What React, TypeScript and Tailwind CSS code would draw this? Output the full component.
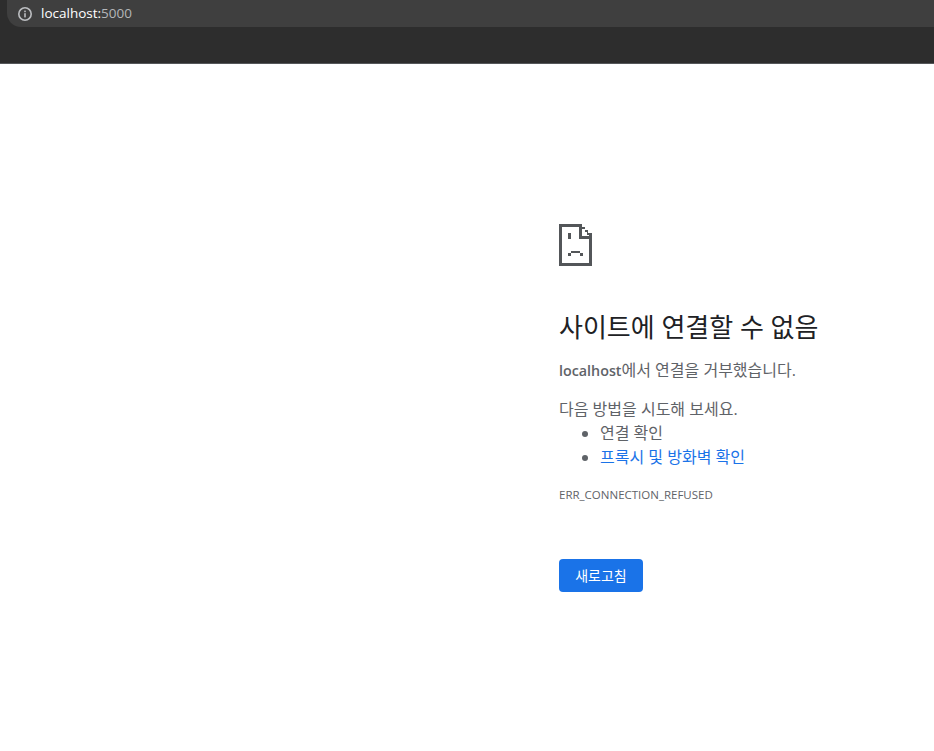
const font = "font-['Open_Sans','Noto_Sans_CJK_KR',sans-serif]"

function InfoIcon() {
  return (
    <svg width="16" height="16" viewBox="0 0 16 16" fill="none" className="text-[#bcbec1]">
      <circle cx="8" cy="8" r="6.2" stroke="currentColor" strokeWidth="1.6" />
      <rect x="7.2" y="7.2" width="1.6" height="4.2" fill="currentColor" />
      <rect x="7.2" y="4.6" width="1.6" height="1.6" fill="currentColor" />
    </svg>
  )
}

function SadPage() {
  return (
    <svg width="33" height="42" viewBox="0 0 33 42" fill="#535659" shapeRendering="crispEdges">
      <path d="M0 0h23v3h3v3h3v3h4v33H0zM3 3v36h27V15H20V3zM23 5v7h7v-1h-2V8h-2V5z" fillRule="evenodd" />
      <rect x="9" y="9" width="3" height="6" />
      <rect x="12" y="27" width="9" height="2" />
      <rect x="9" y="29" width="3" height="3" />
      <rect x="21" y="29" width="3" height="3" />
    </svg>
  )
}

export default function App() {
  return (
    <div className={`min-h-[751px] bg-white ${font}`}>
      <div className="h-[64px] bg-[#2d2d2d] border-b border-[#55575a]">
        <div className="ml-[7px] h-[27px] bg-[#3f3f3f] rounded-bl-[14px] pl-[10px] flex items-center gap-[8px]">
          <InfoIcon />
          <span className="text-[13.5px] leading-none text-white">
            localhost:<span className="text-[#b4b6b9]">5000</span>
          </span>
        </div>
      </div>

      <main className="pl-[559px] pt-[160px]">
        <SadPage />
        <h1 className="mt-[45px] text-[26px] leading-[32px] font-normal text-[#202124]">사이트에 연결할 수 없음</h1>
        <p className="mt-[15px] text-[16px] leading-[24px] text-[#5f6368]">
          <span className="font-semibold text-[14.3px]">localhost</span>에서 연결을 거부했습니다.
        </p>
        <p className="mt-[14px] text-[16px] leading-[24px] text-[#5f6368]">다음 방법을 시도해 보세요.</p>
        <ul className="list-disc pl-[41px] text-[16px] leading-[24px] text-[#5f6368]">
          <li>연결 확인</li>
          <li>
            <a className="text-[#1a73e8]">프록시 및 방화벽 확인</a>
          </li>
        </ul>
        <div className="mt-[18px] text-[11.5px] leading-[16px] text-[#5f6368]">ERR_CONNECTION_REFUSED</div>
        <button className="mt-[56px] w-[84px] h-[33px] rounded-[4px] bg-[#1a73e8] text-white text-[14px] leading-none">
          새로고침
        </button>
      </main>
    </div>
  )
}
